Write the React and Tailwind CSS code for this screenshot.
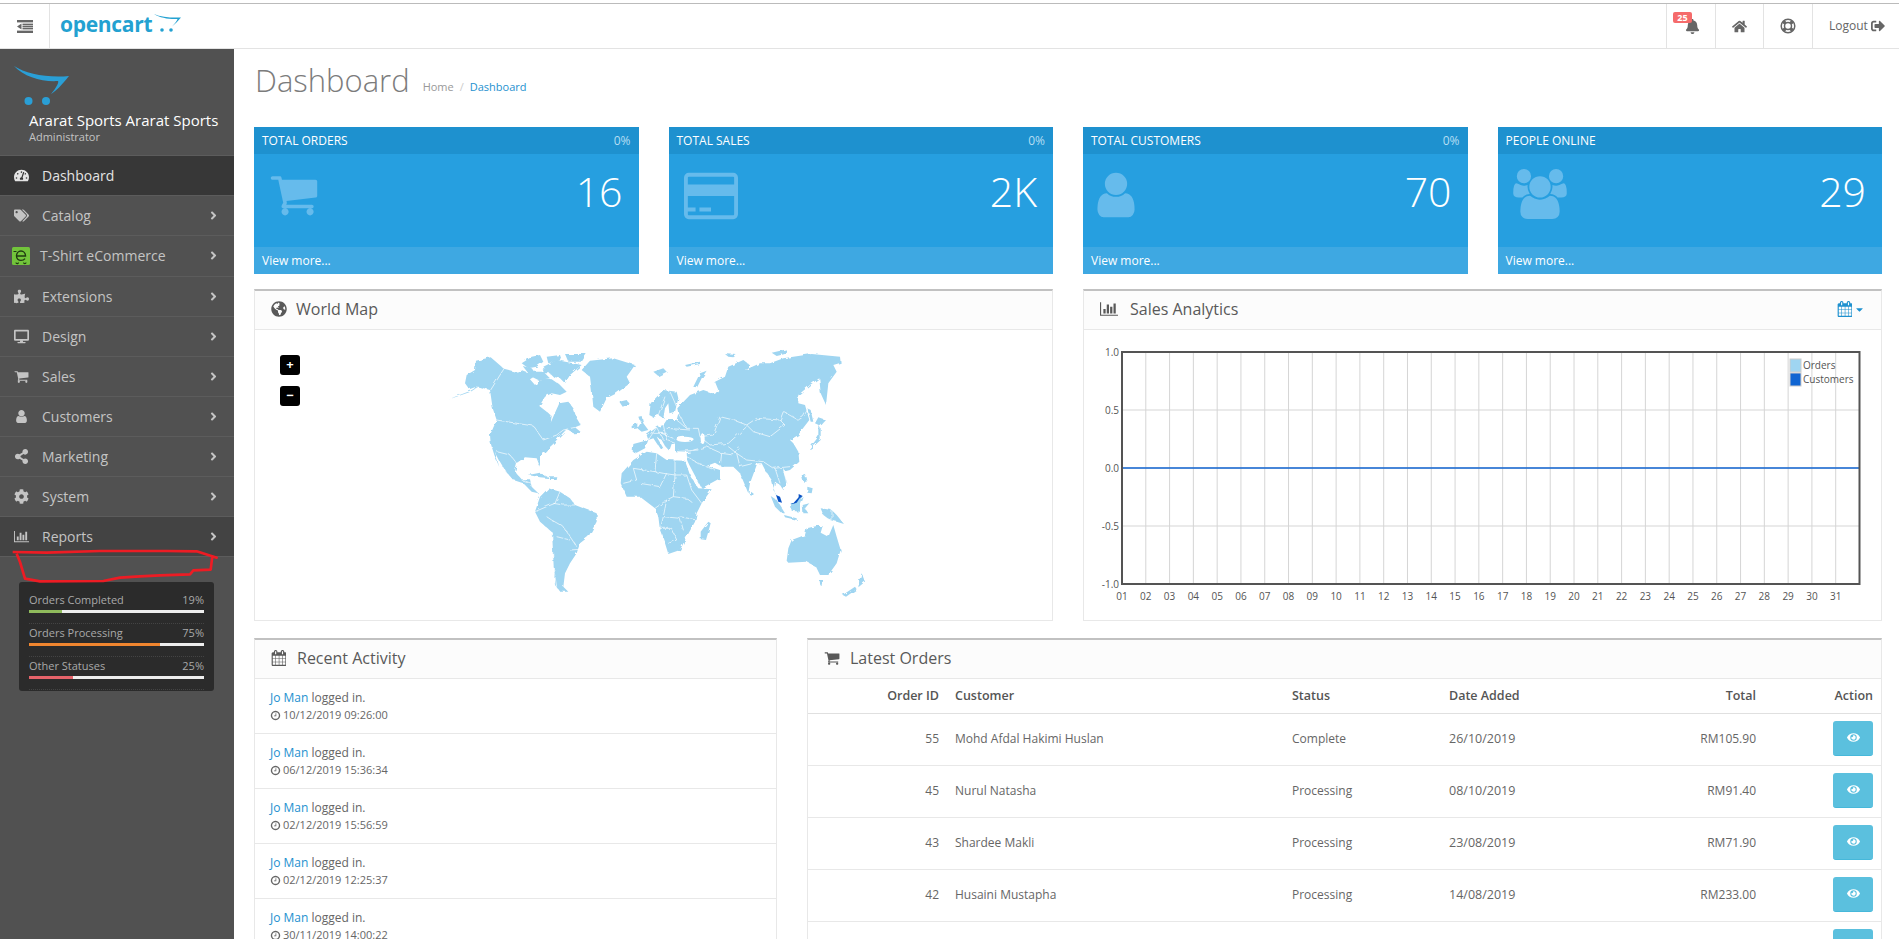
import React from 'react';
import {
  FaTachometerAlt, FaTags, FaPuzzlePiece, FaDesktop, FaShareAlt, FaCog, FaBell, FaHome,
  FaSignOutAlt, FaGlobeAmericas, FaEye, FaAngleRight, FaCaretDown,
} from 'react-icons/fa';

// font awesome 4 glyphs, the newer set in react-icons draws these differently
const CART = 'M704 1536q0 52-38 90t-90 38-90-38-38-90 38-90 90-38 90 38 38 90zm896 0q0 52-38 90t-90 38-90-38-38-90 38-90 90-38 90 38 38 90zm128-1088v512q0 24-16.5 42.5t-40.5 21.5l-1044 122q13 60 13 70 0 16-24 64h920q26 0 45 19t19 45-19 45-45 19h-1024q-26 0-45-19t-19-45q0-11 8-31.5t16-36 21.5-40 15.5-29.5l-177-823h-204q-26 0-45-19t-19-45 19-45 45-19h256q16 0 28.5 6.5t19.5 15.5 13 24.5 8 26 5.5 29.5 4.5 26h1201q26 0 45 19t19 45z';
const CARD = 'M1632 128q66 0 113 47t47 113v1216q0 66-47 113t-113 47h-1472q-66 0-113-47t-47-113v-1216q0-66 47-113t113-47h1472zm-1472 128q-13 0-22.5 9.5t-9.5 22.5v224h1536v-224q0-13-9.5-22.5t-22.5-9.5h-1472zm1472 1280q13 0 22.5-9.5t9.5-22.5v-608h-1536v608q0 13 9.5 22.5t22.5 9.5h1472zm-1504-128v-128h256v128h-256zm384 0v-128h384v128h-384z';
const USER = 'M1536 1399q0 109-62.5 187t-150.5 78h-854q-88 0-150.5-78t-62.5-187q0-85 8.5-160.5t31.5-152 58.5-131 94-89 134.5-34.5q131 128 313 128t313-128q76 0 134.5 34.5t94 89 58.5 131 31.5 152 8.5 160.5zm-256-887q0 159-112.5 271.5t-271.5 112.5-271.5-112.5-112.5-271.5 112.5-271.5 271.5-112.5 271.5 112.5 112.5 271.5z';
const USERS = 'M593 896q-162 5-265 128h-134q-82 0-138-40.5t-56-118.5q0-353 124-353 6 0 43.5 21t97.5 42.5 119 21.5q67 0 133-23-5 37-5 66 0 139 81 256zm1071 637q0 120-73 189.5t-194 69.5h-874q-121 0-194-69.5t-73-189.5q0-53 3.5-103.5t14-109 26.5-108.5 43-97.5 62-81 85.5-53.5 111.5-20q10 0 43 21.5t73 48 107 48 135 21.5 135-21.5 107-48 73-48 43-21.5q61 0 111.5 20t85.5 53.5 62 81 43 97.5 26.5 108.5 14 109 3.5 103.5zm-1024-1277q0 106-75 181t-181 75-181-75-75-181 75-181 181-75 181 75 75 181zm704 384q0 159-112.5 271.5t-271.5 112.5-271.5-112.5-112.5-271.5 112.5-271.5 271.5-112.5 271.5 112.5 112.5 271.5zm576 225q0 78-56 118.5t-138 40.5h-134q-103-123-265-128 81-117 81-256 0-29-5-66 66 23 133 23 59 0 119-21.5t97.5-42.5 43.5-21q124 0 124 353zm-128-609q0 106-75 181t-181 75-181-75-75-181 75-181 181-75 181 75 75 181z';
const BARS = 'M640 896v512h-256v-512h256zm384-512v1024h-256v-1024h256zm1024 1152v128h-2048v-1536h128v1408h1920zm-640-896v768h-256v-768h256zm384-384v1152h-256v-1152h256z';
const CALENDAR = 'M192 1664h288v-288h-288v288zm352 0h320v-288h-320v288zm-352-352h288v-320h-288v320zm352 0h320v-320h-320v320zm-352-384h288v-288h-288v288zm736 736h320v-288h-320v288zm-384-736h320v-288h-320v288zm768 736h288v-288h-288v288zm-384-352h320v-320h-320v320zm-352-864v-288q0-13-9.5-22.5t-22.5-9.5h-64q-13 0-22.5 9.5t-9.5 22.5v288q0 13 9.5 22.5t22.5 9.5h64q13 0 22.5-9.5t9.5-22.5zm736 864h288v-320h-288v320zm-384-384h320v-288h-320v288zm384 0h288v-288h-288v288zm32-480v-288q0-13-9.5-22.5t-22.5-9.5h-64q-13 0-22.5 9.5t-9.5 22.5v288q0 13 9.5 22.5t22.5 9.5h64q13 0 22.5-9.5t9.5-22.5zm384-64v1280q0 52-38 90t-90 38h-1408q-52 0-90-38t-38-90v-1280q0-52 38-90t90-38h128v-96q0-66 47-113t113-47h64q66 0 113 47t47 113v96h384v-96q0-66 47-113t113-47h64q66 0 113 47t47 113v96h128q52 0 90 38t38 90z';
const CLOCK = 'M1024 544v448q0 14-9 23t-23 9h-320q-14 0-23-9t-9-23v-64q0-14 9-23t23-9h224v-352q0-14 9-23t23-9h64q14 0 23 9t9 23zm416 352q0-148-73-273t-198-198-273-73-273 73-198 198-73 273 73 273 198 198 273 73 273-73 198-198 73-273zm224 0q0 209-103 385.5t-279.5 279.5-385.5 103-385.5-103-279.5-279.5-103-385.5 103-385.5 279.5-279.5 385.5-103 385.5 103 279.5 279.5 103 385.5z';

function Fa({ d, box = '0 0 1792 1792', className }) {
  return (
    <svg viewBox={box} className={className} fill="currentColor">
      <path d={d} />
    </svg>
  );
}

const CartIcon = ({ className }) => <Fa d={CART} className={className} />;
const UserIcon = ({ className }) => <Fa d={USER} className={className} />;
const BarsIcon = ({ className }) => <Fa d={BARS} box="0 0 2048 1792" className={className} />;
const CalendarIcon = ({ className }) => <Fa d={CALENDAR} box="0 0 1664 1792" className={className} />;

function TshirtIcon() {
  return (
    <svg viewBox="0 0 18 18" className="w-[18px] h-[18px]">
      <rect width="18" height="18" rx="1.5" fill="#72c43b" />
      <path d="M4.5 9h9c0-3-2-5-4.5-5S4.5 6 4.5 9c0 2.6 2 4.4 4.5 4.4 1.8 0 3.2-.7 4-1.8" fill="none" stroke="#1f3a12" strokeWidth="1.4" />
      <path d="M1.5 4.5h3M4 15.5a1.2 1.2 0 0 0 2.4 0M11.6 15.5a1.2 1.2 0 0 0 2.4 0" fill="none" stroke="#1f3a12" strokeWidth="1.2" />
    </svg>
  );
}

function MenuIcon() {
  return (
    <svg viewBox="0 0 16 13" className="w-[16px] h-[13px]" fill="#666">
      <rect width="16" height="2.4" />
      <rect y="10.6" width="16" height="2.4" />
      <rect x="5.5" y="3.6" width="10.5" height="1.6" />
      <rect x="5.5" y="5.7" width="10.5" height="1.6" />
      <rect x="5.5" y="7.8" width="10.5" height="1.6" />
      <path d="M4.5 3.6v5.8L0 6.5z" />
    </svg>
  );
}

function LifeRing() {
  return (
    <svg viewBox="0 0 16 16" className="w-[16px] h-[16px]" fill="none" stroke="#666">
      <circle cx="8" cy="8" r="6.8" strokeWidth="1.5" />
      <circle cx="8" cy="8" r="3.5" strokeWidth="1.5" />
      <path d="M3.2 3.2L5.6 5.6M12.8 3.2L10.4 5.6M3.2 12.8L5.6 10.4M12.8 12.8L10.4 10.4" strokeWidth="3.4" />
    </svg>
  );
}

const NAV = [
  { label: 'Dashboard', icon: FaTachometerAlt, active: true },
  { label: 'Catalog', icon: FaTags, sub: true },
  { label: 'T-Shirt eCommerce', custom: true, sub: true },
  { label: 'Extensions', icon: FaPuzzlePiece, sub: true },
  { label: 'Design', icon: FaDesktop, sub: true },
  { label: 'Sales', icon: CartIcon, sub: true },
  { label: 'Customers', icon: UserIcon, sub: true },
  { label: 'Marketing', icon: FaShareAlt, sub: true },
  { label: 'System', icon: FaCog, sub: true },
  { label: 'Reports', icon: BarsIcon, sub: true, open: true },
];

const STATS = [
  { label: 'Orders Completed', value: '19%', pct: 19, bar: 'bg-[#8fbb5c]' },
  { label: 'Orders Processing', value: '75%', pct: 75, bar: 'bg-[#f0862f]' },
  { label: 'Other Statuses', value: '25%', pct: 25, bar: 'bg-[#e5636a]' },
];

const TILES = [
  { title: 'TOTAL ORDERS', pct: '0%', value: '16', d: CART, cls: 'w-[50px] h-[50px]' },
  { title: 'TOTAL SALES', pct: '0%', value: '2K', d: CARD, cls: 'w-[54px] h-[54px]' },
  { title: 'TOTAL CUSTOMERS', pct: '0%', value: '70', d: USER, cls: 'w-[52px] h-[52px] -ml-[8px]' },
  { title: 'PEOPLE ONLINE', pct: '', value: '29', d: USERS, box: '0 0 1920 1792', cls: 'w-[54px] h-[50px]' },
];

const ACTIVITY = [
  '10/12/2019 09:26:00',
  '06/12/2019 15:36:34',
  '02/12/2019 15:56:59',
  '02/12/2019 12:25:37',
  '30/11/2019 14:00:22',
];

const ORDERS = [
  ['55', 'Mohd Afdal Hakimi Huslan', 'Complete', '26/10/2019', 'RM105.90'],
  ['45', 'Nurul Natasha', 'Processing', '08/10/2019', 'RM91.40'],
  ['43', 'Shardee Makli', 'Processing', '23/08/2019', 'RM71.90'],
  ['42', 'Husaini Mustapha', 'Processing', '14/08/2019', 'RM233.00'],
  ['41', '', '', '', ''],
];

const LAND = [
  // north america
  'M148,178 L165,170 L212,152 L235,138 L208,148 L195,130 L200,105 L225,90 L228,62 L272,52 L312,86 L345,95 L365,92 L385,100 L368,78 L395,85 L410,105 L390,118 L405,135 L425,115 L455,118 L480,135 L500,155 L480,165 L455,160 L435,170 L418,198 L440,215 L455,228 L452,248 L462,225 L478,190 L505,185 L520,205 L530,235 L542,255 L525,262 L545,278 L520,280 L500,268 L478,290 L462,310 L440,330 L420,352 L420,380 L410,355 L375,352 L352,368 L345,395 L365,418 L390,418 L395,440 L415,460 L395,455 L370,430 L340,420 L318,395 L300,365 L285,335 L298,382 L283,345 L272,310 L270,285 L290,240 L278,205 L270,150 L235,140 L212,155 L165,172Z',
  // south america
  'M405,515 L420,470 L445,445 L480,455 L510,475 L525,495 L590,520 L590,545 L565,590 L540,610 L530,640 L510,670 L495,700 L490,740 L505,755 L480,755 L465,735 L460,680 L455,575 L420,545Z',
  // africa
  'M662,430 L665,400 L700,360 L740,335 L770,340 L800,360 L855,362 L872,410 L895,445 L935,448 L905,490 L890,520 L885,545 L860,590 L840,630 L805,642 L795,610 L780,570 L775,530 L765,505 L720,470 L680,470Z',
  // eurasia
  'M698,335 L700,312 L745,300 L740,285 L770,262 L790,255 L800,240 L830,240 L835,220 L832,205 L870,165 L910,150 L945,162 L955,150 L945,125 L975,110 L985,80 L1030,60 L1050,75 L1035,90 L1080,70 L1110,70 L1150,55 L1235,42 L1320,50 L1322,68 L1300,75 L1310,95 L1285,130 L1278,195 L1262,160 L1258,115 L1230,135 L1195,165 L1195,190 L1215,195 L1228,240 L1205,270 L1195,285 L1170,300 L1180,310 L1195,335 L1198,365 L1170,390 L1150,395 L1162,430 L1150,450 L1140,435 L1125,425 L1120,450 L1145,490 L1125,460 L1115,420 L1098,395 L1085,370 L1072,370 L1050,430 L1045,460 L1020,400 L1000,380 L965,380 L945,368 L920,378 L960,390 L960,415 L905,445 L868,375 L862,362 L860,340 L875,335 L825,335 L825,312 L815,312 L808,332 L795,318 L785,300 L770,290 L790,325 L780,325 L760,295 L745,300 L735,325 L710,338Z',
  // scandinavia, arctic
  'M748,225 L752,190 L790,150 L830,155 L835,175 L825,215 L808,220 L805,190 L795,205 L790,235 L775,225 L760,232Z',
  'M365,70 L395,50 L420,45 L430,65 L410,80 L385,85Z',
  'M460,110 L430,80 L470,60 L545,75 L510,105 L495,130 L480,115Z',
  'M495,42 L560,42 L545,65 L505,65Z',
  'M390,95 L430,95 L450,115 L415,120 L395,110Z',
  'M440,50 L480,45 L485,60 L445,70Z',
  'M425,85 L445,85 L450,100 L430,100Z',
  'M545,90 L570,62 L640,55 L705,75 L680,110 L690,130 L650,160 L620,175 L600,215 L580,200 L575,150 L570,110Z',
  'M658,185 L680,180 L688,192 L668,200Z',
  'M760,95 L790,85 L800,95 L775,108Z',
  'M855,75 L900,65 L900,72 L860,80Z',
  'M880,140 L900,100 L920,92 L905,115 L890,145Z',
  'M975,42 L1010,45 L1000,52 L985,50Z',
  'M1115,38 L1160,28 L1155,42 L1130,48Z',
  // british isles
  'M715,230 L725,228 L730,250 L745,270 L725,275 L712,265 L722,250Z',
  'M695,258 L712,250 L712,262 L695,265Z',
  // indian ocean, asia islands
  'M925,545 L932,550 L918,600 L902,598 L902,575Z',
  'M1050,452 L1058,458 L1055,467 L1050,465Z',
  'M1112,468 L1130,480 L1155,520 L1145,520 L1125,500Z',
  'M1172,490 L1180,490 L1208,468 L1200,490 L1200,515 L1175,512Z',
  'M1152,525 L1190,535 L1190,540 L1155,532Z',
  'M1208,495 L1228,490 L1215,505 L1225,520 L1210,520Z',
  'M1205,405 L1215,402 L1220,425 L1210,425Z',
  'M1222,440 L1238,445 L1235,460 L1222,458Z',
  'M1262,505 L1295,510 L1310,525 L1332,552 L1310,545 L1290,540 L1270,525Z',
  // australia, new zealand
  'M1165,625 L1175,600 L1215,585 L1220,565 L1250,558 L1268,558 L1262,578 L1285,590 L1300,555 L1310,590 L1322,630 L1310,670 L1285,705 L1260,705 L1248,680 L1220,665 L1165,668 L1160,662Z',
  'M1256,720 L1270,720 L1265,735 L1258,733Z',
  'M1378,720 L1385,700 L1395,725 L1375,742Z',
  'M1328,765 L1365,740 L1370,748 L1338,770Z',
  // japan, sakhalin
  'M1225,330 L1240,310 L1255,290 L1255,255 L1262,265 L1262,300 L1240,320Z',
  'M1245,250 L1255,232 L1278,240 L1262,258Z',
  'M1222,205 L1232,210 L1240,245 L1232,245Z',
  // caribbean
  'M385,405 L420,398 L450,415 L420,412Z',
  'M450,412 L472,412 L470,420 L450,420Z',
];

const BORDERS = [
  '312,86 272,150', '290,240 400,258 430,300 470,285 490,270 525,262', '290,335 330,345 350,370 375,355', '365,420 395,430',
  '405,515 440,500 465,490 480,455', '460,490 490,495 525,495', '440,530 455,540 490,560 510,590 530,620', '455,575 460,680 470,740', '470,590 510,600', '510,630 540,628',
  '700,385 710,420 670,430', '770,340 765,395 790,400 825,405 860,405', '825,360 825,405 820,470', '700,385 765,395', '720,430 780,440 800,400', '765,505 800,480 820,470 860,475 880,490', '800,480 790,530 780,570', '840,530 890,540', '790,530 840,535 850,570', '780,565 815,565 830,600 805,610', '860,405 875,450 905,490',
  '835,220 860,265 895,265 900,290 940,285 960,230 1000,240 1040,255 1070,235 1140,240 1150,215 1195,240 1210,230 1228,200', '1040,255 1060,275 1110,290 1155,255 1140,240', '900,290 930,315 985,310 1040,260', '985,320 1010,340 1040,360 1090,365 1120,385 1170,380', '1010,340 1020,380 1060,370', '880,330 920,320 965,340 960,385', '965,340 1000,345 1015,320', '860,350 905,375 945,390', '825,335 895,330',
  '745,300 770,262', '770,262 790,300', '790,255 800,300 825,310', '800,265 870,270', '830,240 860,265', '760,280 800,280', '785,280 820,295', '1125,385 1140,430', '1150,385 1160,430', '795,170 775,225', '810,155 830,200', '1296,510 1296,540',
];

function WorldMap() {
  return (
    <svg viewBox="0 0 1500 840" className="w-[500px] h-[280px]">
      <defs>
        <filter id="coast" x="-5%" y="-5%" width="110%" height="110%">
          <feTurbulence type="fractalNoise" baseFrequency="0.06" numOctaves="2" seed="4" />
          <feDisplacementMap in="SourceGraphic" scale="11" />
        </filter>
      </defs>
      <g filter="url(#coast)">
        {LAND.map((d, i) => <path key={i} d={d} fill="#9fd5f1" />)}
        <ellipse cx="855" cy="298" rx="26" ry="8" fill="#fff" />
        <ellipse cx="908" cy="296" rx="6" ry="16" fill="#fff" />
        {BORDERS.map((p, i) => <polyline key={i} points={p} fill="none" stroke="#fff" strokeWidth="2" />)}
      </g>
      <path d="M1128,465 L1140,470 L1146,488 L1135,485Z" fill="#0a52c4" />
      <path d="M1172,490 L1180,490 L1196,472 L1196,462 L1208,468 L1198,476 L1190,488 L1178,492Z" fill="#0a52c4" />
    </svg>
  );
}

function Chart() {
  const left = 38;
  const right = 775.5;
  const top = 22;
  const bottom = 254;
  const step = (right - left) / 31;
  const days = Array.from({ length: 31 }, (_, i) => i);
  const ticks = [
    ['1.0', 22],
    ['0.5', 80],
    ['0.0', 138],
    ['-0.5', 196],
    ['-1.0', 254],
  ];
  return (
    <svg width="797" height="290" className="block">
      {days.map((i) => (
        <line key={i} x1={left + i * step} x2={left + i * step} y1={top} y2={bottom} stroke="#d5d5d5" />
      ))}
      {ticks.map(([t, y]) => (
        <g key={t}>
          <line x1={left} x2={right} y1={y} y2={y} stroke="#d5d5d5" />
          <text x={left - 3} y={y + 4} textAnchor="end" fontSize="10" fill="#545454">{t}</text>
        </g>
      ))}
      <line x1={left} x2={right} y1="138" y2="138" stroke="#1065d2" strokeWidth="1.3" />
      <rect x={left} y={top} width={right - left} height={bottom - top} fill="none" stroke="#545454" strokeWidth="2" />
      {days.map((i) => (
        <text key={i} x={left + i * step} y="270" textAnchor="middle" fontSize="10" fill="#545454">
          {String(i + 1).padStart(2, '0')}
        </text>
      ))}
      <rect x="706" y="29" width="11" height="13" fill="#9fd5f1" stroke="#ccc" />
      <rect x="706" y="43" width="11" height="13" fill="#1065d2" stroke="#ccc" />
      <text x="719" y="39" fontSize="10" fill="#545454">Orders</text>
      <text x="719" y="53" fontSize="10" fill="#545454">Customers</text>
    </svg>
  );
}

function Sidebar() {
  return (
    <aside className="w-[234px] shrink-0 bg-[#515151] relative">
      {/* profile */}
      <div className="h-[107px] border-b border-[#5c5c5c] pl-[14px] pt-[17px]">
        <svg viewBox="0 0 56 40" className="w-[56px] h-[40px] block">
          <path d="M0 0C12 8 34 12 55 10C48 19 41 26 37 28C43 21 45 16 44 15C28 16 10 11 0 0Z" fill="#2a9fd6" />
          <circle cx="14.5" cy="35" r="4" fill="#2a9fd6" />
          <circle cx="32" cy="35" r="4" fill="#2a9fd6" />
        </svg>
        <div className="pl-[15px] mt-[4px] text-[15px] leading-[20px] text-white whitespace-nowrap">Ararat Sports Ararat Sports</div>
        <div className="pl-[15px] text-[11px] leading-[14px] text-[#c3c3c3]">Administrator</div>
      </div>

      <nav>
        {NAV.map(({ label, icon: Icon, custom, sub, active, open }) => (
          <div
            key={label}
            className={`flex items-center border-b border-[#5c5c5c] pr-[14px] text-[14px] ${active ? 'bg-[#373737] text-[#e4e4e4]' : open ? 'bg-[#434343] text-[#c4c4c4]' : 'text-[#c4c4c4]'} ${custom ? 'pl-[12px] h-[41px] pb-[1px]' : 'pl-[14px] h-[40px]'}`}
          >
            {custom ? (
              <span className="w-[28px] shrink-0"><TshirtIcon /></span>
            ) : (
              <span className="w-[28px] shrink-0 flex"><Icon className="w-[15px] h-[15px]" /></span>
            )}
            <span className="flex-1 whitespace-nowrap">{label}</span>
            {sub && <FaAngleRight className="w-[13px] h-[13px] text-[#c4c4c4]" />}
          </div>
        ))}
      </nav>

      {/* order status box */}
      <div className="ml-[19px] mt-[25px] w-[195px] h-[109px] bg-[#2b2b2b] rounded-[3px] px-[10px] pt-[9px]">
        {STATS.map((s) => (
          <div key={s.label} className="h-[33px] border-b border-dotted border-[#444]">
            <div className="flex justify-between text-[11px] leading-[17px] text-[#a9a9a9]">
              <span>{s.label}</span>
              <span>{s.value}</span>
            </div>
            <div className="h-[3px] mt-[2px] bg-[#eee]">
              <div className={`h-full ${s.bar}`} style={{ width: `${s.pct}%` }} />
            </div>
          </div>
        ))}
      </div>

      {/* hand drawn mark over the screenshot */}
      <svg viewBox="0 0 702 120" className="absolute left-0 top-[498px] w-[234px] h-[40px] overflow-visible">
        <path
          d="M38,15 L140,17 L300,12 L500,12 L590,13 L650,32 L637,28 L632,68 L580,70 L570,82 L480,85 L420,88 L360,92 L310,102 L120,103 L75,95 L60,45 L50,20"
          fill="none"
          stroke="#ed1c24"
          strokeWidth="8"
          strokeLinejoin="round"
        />
      </svg>
    </aside>
  );
}

function Panel({ icon, title, right, children }) {
  return (
    <div className="border border-[#e8e8e8] border-t-2 border-t-[#c1c1c1] flex flex-col min-w-0">
      <div className="h-[39px] shrink-0 bg-[#fcfcfc] border-b border-[#e8e8e8] flex items-center pl-[16px] pr-[16px] pb-[2px] text-[#595959]">
        {icon}
        <span className="text-[16px]">{title}</span>
        {right}
      </div>
      {children}
    </div>
  );
}

function Tile({ title, pct, value, d, box, cls }) {
  return (
    <div className="h-[147px] flex flex-col bg-[#269fe0] text-white">
      <div className="h-[27px] bg-[#1e91cf] flex items-center justify-between px-[8px] text-[12px]">
        <span>{title}</span>
        <span className="text-[#b5def3]">{pct}</span>
      </div>
      <div className="flex-1 flex items-start justify-between pl-[15px] pr-[16px]">
        <Fa d={d} box={box} className={`${cls} text-[#66bbec] mt-[15px]`} />
        <span className="text-[41px] leading-[56px] font-light mt-[9px]">{value}</span>
      </div>
      <div className="h-[27px] bg-[#3ea8e2] flex items-center px-[8px] pt-[1px] text-[12px]">View more...</div>
    </div>
  );
}

export default function App() {
  return (
    <div className="h-screen overflow-hidden flex flex-col bg-white pt-[3px] text-[#666]" style={{ fontFamily: '"Open Sans", sans-serif' }}>
      <header className="h-[46px] shrink-0 flex items-stretch border-t border-t-[#bbb] border-b border-b-[#e3e3e3]">
        <div className="w-[50px] border-r border-[#e3e3e3] flex items-center justify-center">
          <MenuIcon />
        </div>
        <div className="pl-[10px] flex items-start">
          <span className="text-[21px] leading-[40px] font-bold tracking-[-0.3px] text-[#23a1d1]">opencart</span>
          <svg viewBox="0 0 28 20" className="w-[28px] h-[20px] mt-[10px] ml-[2px]">
            <path d="M0 0C7 3 17 4 27 3.5C24 7 21 10 18 12.5C21 9 23 7 23.5 5C16 5.5 6 4 0 0Z" fill="#23a1d1" />
            <circle cx="8" cy="16" r="1.8" fill="#23a1d1" />
            <circle cx="17" cy="16" r="1.8" fill="#23a1d1" />
          </svg>
        </div>
        <div className="ml-auto flex items-stretch text-[#666]">
          <div className="w-[49px] border-l border-[#e3e3e3] relative flex items-center justify-center">
            <FaBell className="w-[15px] h-[15px] ml-[2px]" />
            <span className="absolute left-[6px] top-[8px] h-[11px] w-[19px] rounded-[2px] bg-[#f56b6b] text-white text-[9px] leading-[11px] font-bold text-center">25</span>
          </div>
          <div className="w-[48px] border-l border-[#e3e3e3] flex items-center justify-center">
            <FaHome className="w-[15px] h-[15px]" />
          </div>
          <div className="w-[49px] border-l border-[#e3e3e3] flex items-center justify-center">
            <LifeRing />
          </div>
          <div className="w-[87px] border-l border-[#e3e3e3] flex items-center pl-[16px] text-[12px]">
            Logout<FaSignOutAlt className="w-[14px] h-[14px] ml-[3px]" />
          </div>
        </div>
      </header>

      <div className="flex-1 flex min-h-0">
        <Sidebar />
        <main className="flex-1 min-w-0 pl-[20px] pr-[17px]">
          <div className="h-[78px] flex items-start">
            <h1 className="text-[31px] leading-[44px] font-light text-[#7c7c7c] mt-[9px] ml-[1px]">Dashboard</h1>
            <div className="ml-[13px] mt-[30px] text-[11px] leading-[16px] flex">
              <span className="text-[#999]">Home</span>
              <span className="text-[#ccc] mx-[6px]">/</span>
              <span className="text-[#1e91cf]">Dashboard</span>
            </div>
          </div>

          <div className="grid grid-cols-4 gap-x-[30px]">
            {TILES.map((t) => <Tile key={t.title} {...t} />)}
          </div>

          <div className="grid grid-cols-2 gap-x-[30px] mt-[15px] h-[332px]">
            <Panel icon={<FaGlobeAmericas className="w-[16px] h-[16px] mr-[9px]" />} title="World Map">
              <div className="relative flex-1 pl-[145px] pt-[10px]">
                <WorldMap />
                <div className="absolute left-[25px] top-[25px] flex flex-col gap-[11px]">
                  <span className="w-[20px] h-[20px] rounded-[3px] bg-black text-[#fff] text-[13px] leading-[19px] font-bold text-center">+</span>
                  <span className="w-[20px] h-[20px] rounded-[3px] bg-black text-[#fff] text-[13px] leading-[19px] font-bold text-center">−</span>
                </div>
              </div>
            </Panel>
            <Panel
              icon={<BarsIcon className="w-[18px] h-[16px] mr-[12px]" />}
              title="Sales Analytics"
              right={
                <span className="ml-auto flex items-center text-[#1e91cf]">
                  <CalendarIcon className="w-[15px] h-[16px]" />
                  <FaCaretDown className="w-[11px] h-[11px] ml-[2px]" />
                </span>
              }
            >
              <Chart />
            </Panel>
          </div>

          <div className="grid grid-cols-[523px_1fr] gap-x-[30px] mt-[17px]">
            <Panel icon={<CalendarIcon className="w-[15px] h-[16px] mr-[11px]" />} title="Recent Activity">
              {ACTIVITY.map((time) => (
                <div key={time} className="h-[55px] border-b border-[#e8e8e8] pl-[15px] pt-[9px] text-[12px] leading-[19px]">
                  <div><span className="text-[#1e91cf]">Jo Man</span> logged in.</div>
                  <div className="flex items-center text-[11px] leading-[16px]">
                    <Fa d={CLOCK} className="w-[11px] h-[11px] mr-[2px]" />
                    {time}
                  </div>
                </div>
              ))}
            </Panel>

            <Panel icon={<CartIcon className="w-[16px] h-[16px] mr-[10px]" />} title="Latest Orders">
              <table className="w-full table-fixed border-collapse text-[12px]">
                <colgroup>
                  <col className="w-[139px]" />
                  <col className="w-[337px]" />
                  <col className="w-[157px]" />
                  <col className="w-[157px]" />
                  <col className="w-[166px]" />
                  <col />
                </colgroup>
                <thead>
                  <tr className="h-[34px] border-b border-[#e0e0e0] font-semibold text-[12.5px] text-[#555]">
                    <td className="px-[8px] pt-[2px] text-right">Order ID</td>
                    <td className="px-[8px] pt-[2px]">Customer</td>
                    <td className="px-[8px] pt-[2px]">Status</td>
                    <td className="px-[8px] pt-[2px]">Date Added</td>
                    <td className="px-[8px] pt-[2px] text-right">Total</td>
                    <td className="px-[8px] pt-[2px] text-right">Action</td>
                  </tr>
                </thead>
                <tbody>
                  {ORDERS.map(([id, name, status, date, total]) => (
                    <tr key={id} className="h-[52px] border-b border-[#e8e8e8]">
                      <td className="px-[8px] text-right">{name && id}</td>
                      <td className="px-[8px] whitespace-nowrap">{name}</td>
                      <td className="px-[8px]">{status}</td>
                      <td className="px-[8px] text-[12.5px]">{date}</td>
                      <td className="px-[8px] text-right">{total}</td>
                      <td className="px-[8px] pb-[2px] text-right">
                        <span className="inline-flex w-[40px] h-[35px] align-middle items-center justify-center rounded-[3px] bg-[#5bc0de] border-b border-[#46b8da] text-white">
                          <FaEye className="w-[13px] h-[13px]" />
                        </span>
                      </td>
                    </tr>
                  ))}
                </tbody>
              </table>
            </Panel>
          </div>
        </main>
      </div>
    </div>
  );
}
